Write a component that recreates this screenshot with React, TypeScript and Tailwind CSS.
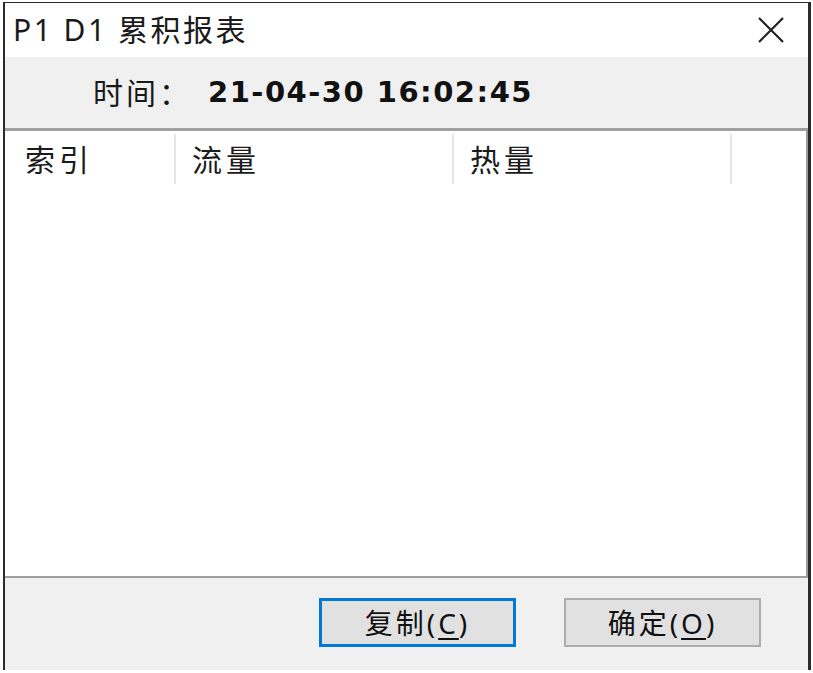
import React from "react"

const cjk = { fontFamily: '"Noto Sans", "Noto Sans CJK SC", sans-serif' }

export default function App() {
  return (
    <div className="w-[813px] h-[673px] bg-white pt-[2px] pl-[3px]" style={cjk}>
      <div className="w-[808px] h-[668px] flex flex-col border-l-[2px] border-t-[1px] border-r-[3px] border-[#2b2b2b] bg-[#f0f0f0]">
        {/* title bar */}
        <div className="h-[54px] bg-white flex items-center justify-between pl-[8px] pr-[22px]">
          <span className="text-[30px] tracking-[2.5px] text-[#1a1a1a] leading-none">P1 D1 累积报表</span>
          <svg width="30" height="30" viewBox="0 0 30 30">
            <path d="M3 3 L27 27 M27 3 L3 27" stroke="#222" strokeWidth="2.2" fill="none" />
          </svg>
        </div>

        {/* info band */}
        <div className="h-[71px] flex items-center pl-[88px] gap-[16px]">
          <span className="text-[30px] tracking-[3px] text-[#1a1a1a]">时间：</span>
          <span className="text-[29px] tracking-[1.5px] font-bold text-[#111]" style={{ fontFamily: '"DejaVu Sans", sans-serif' }}>
            21-04-30 16:02:45
          </span>
        </div>

        {/* list view */}
        <div className="flex-1 flex flex-col bg-white border-t-[3px] border-t-[#a0a0a0] border-r-[2px] border-r-[#9a9a9a] border-b-[2px] border-b-[#a0a0a0]">
          <div className="flex h-[53px] pt-[3px]">
            <div className="w-[171px] flex items-center pl-[20px] border-r-[2px] border-[#e5e5e5]">
              <span className="text-[30px] tracking-[4px] text-[#1a1a1a]">索引</span>
            </div>
            <div className="w-[278px] flex items-center pl-[16px] border-r-[2px] border-[#e5e5e5]">
              <span className="text-[30px] tracking-[4px] text-[#1a1a1a]">流量</span>
            </div>
            <div className="w-[278px] flex items-center pl-[16px] border-r-[2px] border-[#e5e5e5]">
              <span className="text-[30px] tracking-[4px] text-[#1a1a1a]">热量</span>
            </div>
          </div>
          <div className="flex-1" />
        </div>

        {/* buttons */}
        <div className="h-[92px] flex items-start pt-[20px] pl-[314px] gap-[48px]">
          <button className="w-[197px] h-[49px] bg-[#e1e1e1] border-[3px] border-[#0078d7] text-[28px] tracking-[3px] text-[#111] leading-none">
            复制(<span className="underline underline-offset-4">C</span>)
          </button>
          <button className="w-[197px] h-[49px] bg-[#e1e1e1] border-[2px] border-[#adadad] text-[28px] tracking-[3px] text-[#111] leading-none">
            确定(<span className="underline underline-offset-4">O</span>)
          </button>
        </div>
      </div>
    </div>
  )
}
